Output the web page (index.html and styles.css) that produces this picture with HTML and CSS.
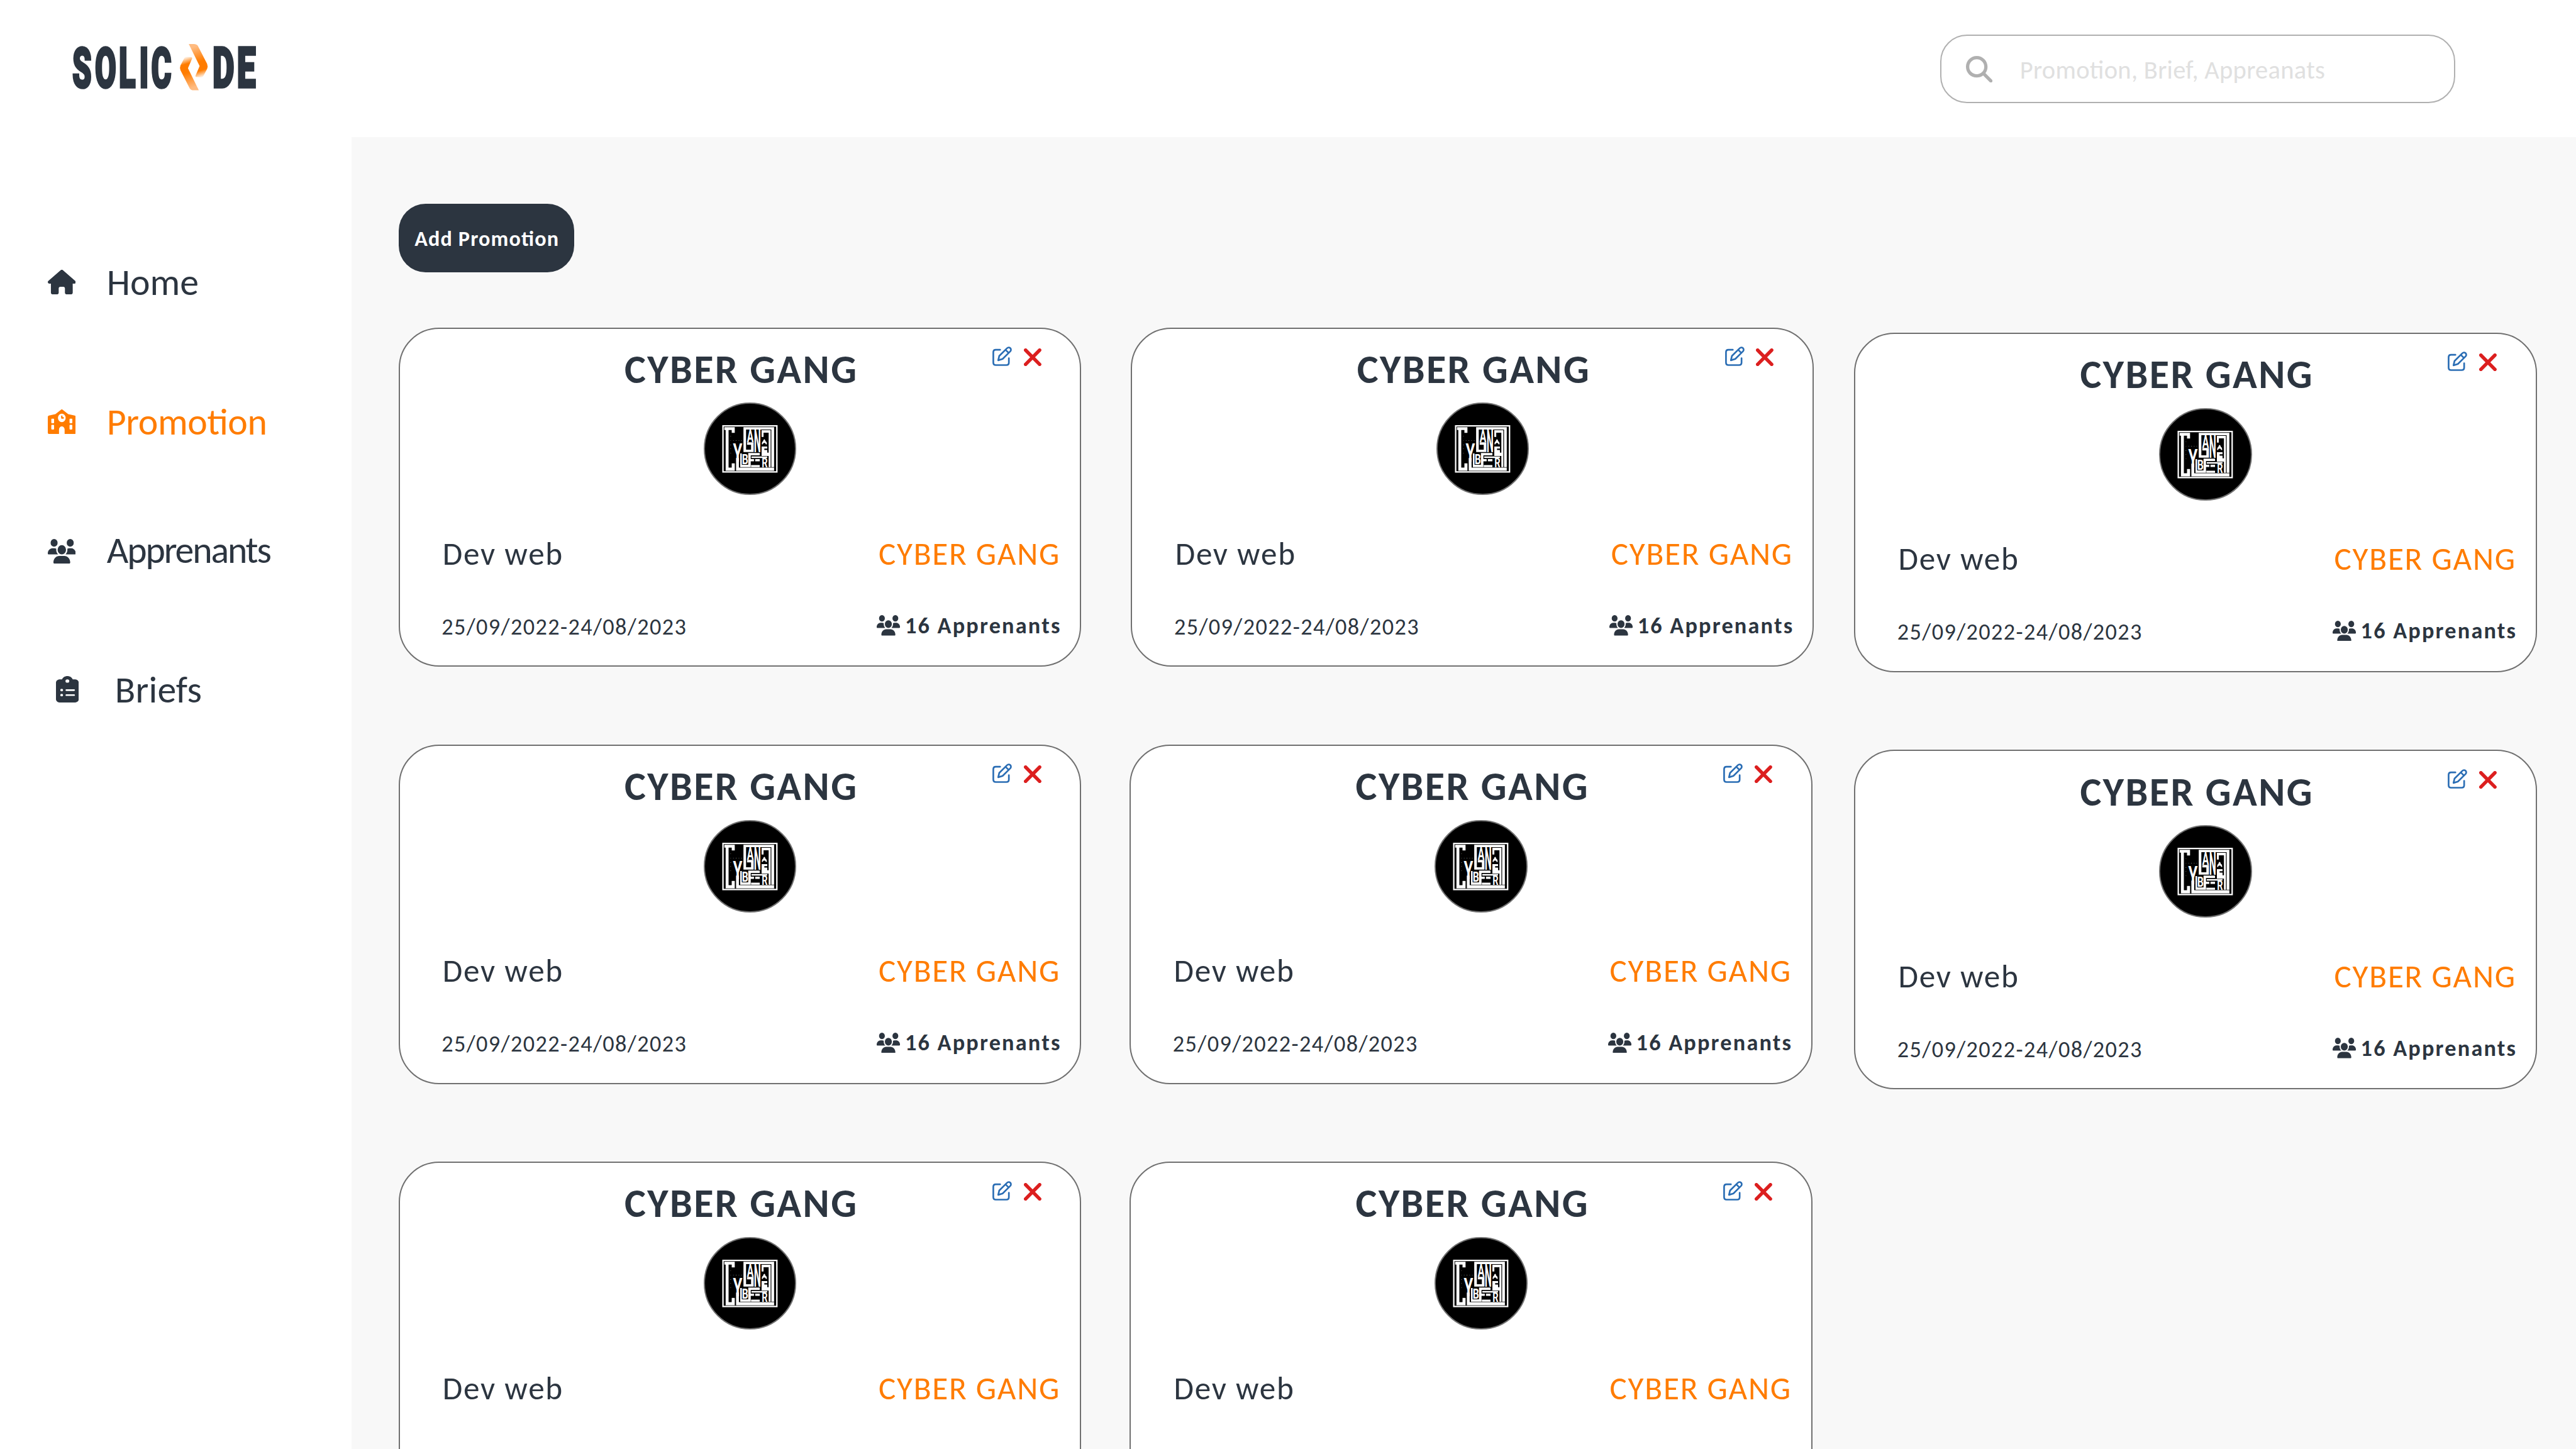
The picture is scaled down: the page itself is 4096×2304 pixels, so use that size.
FILE: index.html
```html
<!DOCTYPE html>
<html lang="fr">
<head>
<meta charset="utf-8">
<title>Solicode - Promotion</title>
<link rel="stylesheet" href="styles.css">
</head>
<body>
<svg class="sprite" aria-hidden="true">
  <symbol id="house" viewBox="0 0 576 512" preserveAspectRatio="none"><path d="M575.8 255.5c0 18-15 32.1-32 32.1h-32l.7 160.2c0 2.7-.2 5.4-.5 8.1V472c0 22.1-17.9 40-40 40H392c-22.1 0-40-17.9-40-40V384c0-17.7-14.3-32-32-32H256c-17.7 0-32 14.3-32 32v88c0 22.1-17.9 40-40 40H104c-22.1 0-40-17.9-40-40V287.6H32c-18 0-32-14-32-32.1c0-9 3-17 10-24L266.4 8c7-7 15-8 22-8s15 2 21 7L564.8 231.5c8 7 12 15 11 24z"/></symbol>
  <symbol id="school" viewBox="0 0 640 512" preserveAspectRatio="none"><path fill-rule="evenodd" d="M337.8 5.4C327-1.8 313-1.8 302.2 5.4L174 98L26 127Q0 133 0 158V480c0 17.7 14.3 32 32 32H256V416a64 64 0 0 1 128 0v96H608c17.7 0 32-14.3 32-32V158Q640 133 614 127L466 98zM96 192h32c8.8 0 16 7.2 16 16v64c0 8.8-7.2 16-16 16H96c-8.8 0-16-7.2-16-16V208c0-8.8 7.2-16 16-16zm400 16c0-8.8 7.2-16 16-16h32c8.8 0 16 7.2 16 16v64c0 8.8-7.2 16-16 16H512c-8.8 0-16-7.2-16-16V208zM96 320h32c8.8 0 16 7.2 16 16v64c0 8.8-7.2 16-16 16H96c-8.8 0-16-7.2-16-16V336c0-8.8 7.2-16 16-16zm400 16c0-8.8 7.2-16 16-16h32c8.8 0 16 7.2 16 16v64c0 8.8-7.2 16-16 16H512c-8.8 0-16-7.2-16-16V336zM232 176a88 88 0 1 1 176 0 88 88 0 1 1 -176 0zm88-48c-8.8 0-16 7.2-16 16v32c0 8.8 7.2 16 16 16h32c8.8 0 16-7.2 16-16s-7.2-16-16-16H336V144c0-8.8-7.2-16-16-16z"/></symbol>
  <symbol id="users" viewBox="0 0 640 512" preserveAspectRatio="none"><path d="M144 0a80 80 0 1 1 0 160A80 80 0 1 1 144 0zM512 0a80 80 0 1 1 0 160A80 80 0 1 1 512 0zM0 298.7C0 239.8 47.8 192 106.7 192h42.7c15.9 0 31 3.5 44.6 9.7c-1.3 7.2-1.9 14.7-1.9 22.3c0 38.2 16.8 72.5 43.3 96H21.3C9.6 320 0 310.4 0 298.7zM404.6 320c26.6-23.5 43.3-57.8 43.3-96c0-7.6-.7-15-1.9-22.3c13.6-6.3 28.7-9.7 44.6-9.7h42.7C592.2 192 640 239.8 640 298.7c0 11.8-9.6 21.3-21.3 21.3H404.6zM224 224a96 96 0 1 1 192 0 96 96 0 1 1 -192 0zM128 485.3C128 411.7 187.7 352 261.3 352H378.7C452.3 352 512 411.7 512 485.3c0 14.7-11.9 26.7-26.7 26.7H154.7c-14.7 0-26.7-11.9-26.7-26.7z"/></symbol>
  <symbol id="clipboard" viewBox="0 0 384 512" preserveAspectRatio="none"><path fill-rule="evenodd" d="M192 0c-41.8 0-77.4 26.7-90.5 64H64C28.7 64 0 92.7 0 128V448c0 35.3 28.7 64 64 64H320c35.3 0 64-28.7 64-64V128c0-35.3-28.7-64-64-64H282.5C269.4 26.7 233.8 0 192 0zm0 64a32 32 0 1 1 0 64 32 32 0 1 1 0-64zM72 272a24 24 0 1 1 48 0 24 24 0 1 1 -48 0zm104-16H304c8.8 0 16 7.2 16 16s-7.2 16-16 16H176c-8.8 0-16-7.2-16-16s7.2-16 16-16zM72 368a24 24 0 1 1 48 0 24 24 0 1 1 -48 0zm88 0c0-8.8 7.2-16 16-16H304c8.8 0 16 7.2 16 16s-7.2 16-16 16H176c-8.8 0-16-7.2-16-16z"/></symbol>
  <symbol id="edit" viewBox="115 68 175 175"><path fill="none" stroke="currentColor" stroke-width="15" stroke-linecap="round" stroke-linejoin="round" d="M184 97H145Q123 97 123 119V212Q123 234 145 234H240Q262 234 262 212V172M167 191L176 152L246 83A19.5 19.5 0 0 1 275 111L206 179ZM233 98L260 125"/></symbol>
  <symbol id="cross" viewBox="396 85 157 158"><path fill="none" stroke="currentColor" stroke-width="31" stroke-linecap="round" d="M411.5 100.5L537 227.5M537 100.5L411.5 227.5"/></symbol>
  <symbol id="gang" viewBox="55 60 827 829">
    <rect x="219.5" y="263.5" width="496" height="424" fill="none" stroke="#fff" stroke-width="13"/>
    <g fill="#fff">
      <path d="M232 275H328V328H300V302H271V648H300V608H328V676H244V302H232z"/>
      <path d="M408 275H690V644H665V297H432V482H478V438H441V415H502V504H408z"/>
      <path d="M575 303H658V644H640V540H575V453H627V473H600V510H640V327H593V365H575zM600 485H627V510H600z"/>
      <path d="M340 560H366V648H690V676H340z"/>
      <path d="M378 517H393V622H452V513H558V535H475V570H505V590H475V644H378zM516 570H558V590H516zM478 624H558V644H478zM482 545H627V560H482z"/>
      <path d="M600 386Q610 394 612 406Q624 410 624 434H614Q612 420 600 420Q588 420 586 434H577Q577 410 588 406Q590 394 600 386z"/>
    </g>
    <g class="art-type">
      <text x="311" y="592" font-size="235" textLength="86" lengthAdjust="spacingAndGlyphs">Y</text>
      <text x="440" y="413" font-size="158" textLength="61" lengthAdjust="spacingAndGlyphs">A</text>
      <text x="504" y="503" font-size="284" textLength="64" lengthAdjust="spacingAndGlyphs">N</text>
      <text x="394" y="618" font-size="127" textLength="58" lengthAdjust="spacingAndGlyphs">B</text>
      <text x="577" y="644" font-size="118" textLength="54" lengthAdjust="spacingAndGlyphs">R</text>
    </g>
    <g class="art-note">
      <text x="286 286 286 286 286" y="361 400 440 479 518">CYBER</text>
      <text x="311 336 361 386" y="400">GANG</text>
    </g>
  </symbol>
</svg>

<header class="topbar">
  <svg class="logo" viewBox="0 0 620 200" role="img" aria-label="Solicode">
    <defs>
      <linearGradient id="flame" gradientUnits="userSpaceOnUse" x1="390" y1="32" x2="420" y2="132">
        <stop offset="0.1" stop-color="#ffbb80"/>
        <stop offset="0.55" stop-color="#ff7c00"/>
        <stop offset="0.8" stop-color="#ff7c00"/>
        <stop offset="0.99" stop-color="#ff7c00" stop-opacity="0.08"/>
      </linearGradient>
      <path id="chevron" fill="url(#flame)" d="M382.8 31.7H398Q406 31.7 409.5 36.5L437.5 91Q440.5 99 437.5 106L426 128Q424.5 132 419 131.5L407 130.5Q401.5 130 403 126L415.2 97.3z"/>
    </defs>
    <g class="logo-type">
      <text transform="scale(.55 1)" x="65 187.4 317 427.7 492.8" y="162.2">SOLIC</text>
      <text transform="scale(.6 1)" x="756.2 877.7" y="162.2">DE</text>
    </g>
    <use href="#chevron"/>
    <use href="#chevron" transform="rotate(180 397.8 100.7)"/>
  </svg>
  <label class="search">
    <svg class="search-icon" viewBox="0 0 512 512"><path d="M416 208c0 45.9-14.9 88.3-40 122.7L502.6 457.4c12.5 12.5 12.5 32.8 0 45.3s-32.8 12.5-45.3 0L330.7 376c-34.4 25.2-76.8 40-122.7 40C93.1 416 0 322.9 0 208S93.1 0 208 0S416 93.1 416 208zM208 352a144 144 0 1 0 0-288 144 144 0 1 0 0 288z"/></svg>
    <input class="search-input" type="text" placeholder="Promotion, Brief, Appreanats">
  </label>
</header>

<div class="layout">
  <nav class="sidebar">
    <a class="nav-item"><svg class="nav-icon"><use href="#house"/></svg><span class="nav-label">Home</span></a>
    <a class="nav-item nav-item--active"><svg class="nav-icon"><use href="#school"/></svg><span class="nav-label">Promotion</span></a>
    <a class="nav-item nav-item--learners"><svg class="nav-icon"><use href="#users"/></svg><span class="nav-label">Apprenants</span></a>
    <a class="nav-item nav-item--briefs"><svg class="nav-icon"><use href="#clipboard"/></svg><span class="nav-label">Briefs</span></a>
  </nav>

  <main class="content">
    <button class="add-button">Add Promotion</button>
    <div class="cards">
      <article class="card">
        <div class="card-actions"><svg class="edit"><use href="#edit"/></svg><svg class="delete"><use href="#cross"/></svg></div>
        <h2 class="card-title">CYBER GANG</h2>
        <svg class="avatar"><use href="#gang"/></svg>
        <div class="card-row"><span class="field">Dev web</span><span class="group">CYBER GANG</span></div>
        <div class="card-foot"><span class="dates">25/09/2022-24/08/2023</span><span class="count"><svg class="count-icon"><use href="#users"/></svg><span class="count-text">16 Apprenants</span></span></div>
      </article>
      <article class="card">
        <div class="card-actions"><svg class="edit"><use href="#edit"/></svg><svg class="delete"><use href="#cross"/></svg></div>
        <h2 class="card-title">CYBER GANG</h2>
        <svg class="avatar"><use href="#gang"/></svg>
        <div class="card-row"><span class="field">Dev web</span><span class="group">CYBER GANG</span></div>
        <div class="card-foot"><span class="dates">25/09/2022-24/08/2023</span><span class="count"><svg class="count-icon"><use href="#users"/></svg><span class="count-text">16 Apprenants</span></span></div>
      </article>
      <article class="card card--low">
        <div class="card-actions"><svg class="edit"><use href="#edit"/></svg><svg class="delete"><use href="#cross"/></svg></div>
        <h2 class="card-title">CYBER GANG</h2>
        <svg class="avatar"><use href="#gang"/></svg>
        <div class="card-row"><span class="field">Dev web</span><span class="group">CYBER GANG</span></div>
        <div class="card-foot"><span class="dates">25/09/2022-24/08/2023</span><span class="count"><svg class="count-icon"><use href="#users"/></svg><span class="count-text">16 Apprenants</span></span></div>
      </article>
      <article class="card">
        <div class="card-actions"><svg class="edit"><use href="#edit"/></svg><svg class="delete"><use href="#cross"/></svg></div>
        <h2 class="card-title">CYBER GANG</h2>
        <svg class="avatar"><use href="#gang"/></svg>
        <div class="card-row"><span class="field">Dev web</span><span class="group">CYBER GANG</span></div>
        <div class="card-foot"><span class="dates">25/09/2022-24/08/2023</span><span class="count"><svg class="count-icon"><use href="#users"/></svg><span class="count-text">16 Apprenants</span></span></div>
      </article>
      <article class="card card--near">
        <div class="card-actions"><svg class="edit"><use href="#edit"/></svg><svg class="delete"><use href="#cross"/></svg></div>
        <h2 class="card-title">CYBER GANG</h2>
        <svg class="avatar"><use href="#gang"/></svg>
        <div class="card-row"><span class="field">Dev web</span><span class="group">CYBER GANG</span></div>
        <div class="card-foot"><span class="dates">25/09/2022-24/08/2023</span><span class="count"><svg class="count-icon"><use href="#users"/></svg><span class="count-text">16 Apprenants</span></span></div>
      </article>
      <article class="card card--low">
        <div class="card-actions"><svg class="edit"><use href="#edit"/></svg><svg class="delete"><use href="#cross"/></svg></div>
        <h2 class="card-title">CYBER GANG</h2>
        <svg class="avatar"><use href="#gang"/></svg>
        <div class="card-row"><span class="field">Dev web</span><span class="group">CYBER GANG</span></div>
        <div class="card-foot"><span class="dates">25/09/2022-24/08/2023</span><span class="count"><svg class="count-icon"><use href="#users"/></svg><span class="count-text">16 Apprenants</span></span></div>
      </article>
      <article class="card">
        <div class="card-actions"><svg class="edit"><use href="#edit"/></svg><svg class="delete"><use href="#cross"/></svg></div>
        <h2 class="card-title">CYBER GANG</h2>
        <svg class="avatar"><use href="#gang"/></svg>
        <div class="card-row"><span class="field">Dev web</span><span class="group">CYBER GANG</span></div>
      </article>
      <article class="card card--near">
        <div class="card-actions"><svg class="edit"><use href="#edit"/></svg><svg class="delete"><use href="#cross"/></svg></div>
        <h2 class="card-title">CYBER GANG</h2>
        <svg class="avatar"><use href="#gang"/></svg>
        <div class="card-row"><span class="field">Dev web</span><span class="group">CYBER GANG</span></div>
      </article>
    </div>
  </main>
</div>
</body>
</html>
```
FILE: styles.css
```css
/* 1rem = 10 units of the 1920-wide layout */
html { font-size: calc(100vw / 192); }
* { box-sizing: border-box; }
body {
  margin: 0;
  height: 100vh;
  overflow: hidden;
  display: flex;
  flex-direction: column;
  background: #fff;
  color: #2c3540;
  font-family: Carlito, Calibri, Lato, sans-serif;
  font-feature-settings: "liga" 1;
}
svg { display: block; fill: currentColor; }
.sprite { position: absolute; width: 0; height: 0; }

.topbar {
  flex: none;
  display: flex;
  justify-content: space-between;
  align-items: flex-start;
  height: 10.2rem;
  padding: 2.5rem 9rem 0 4.5rem;
}
.logo { width: 15.5rem; height: 5rem; }
.logo-type text {
  font: 900 167px Roboto, sans-serif;
  fill: #2c3540;
  stroke: #2c3540;
  stroke-width: 7;
}
.search {
  display: flex;
  align-items: center;
  gap: 2.05rem;
  width: 38.4rem;
  height: 5.1rem;
  margin-top: .1rem;
  padding-left: 1.83rem;
  border: .1rem solid #b0b0b0;
  border-radius: 2rem;
}
.search-icon { flex: none; width: 1.98rem; height: 1.98rem; color: #b0b0b0; }
.search-input {
  flex: 1;
  min-width: 0;
  height: 100%;
  padding: .08rem 0 0;
  border: 0;
  outline: 0;
  background: none;
  font: inherit;
  font-size: 1.9rem;
  letter-spacing: .3px;
  font-feature-settings: "liga" 1;
}
.search-input::placeholder { color: #e0e0e0; opacity: 1; }

.layout { flex: 1; min-height: 0; display: flex; }
.sidebar { flex: none; width: 26.2rem; padding: 8.83rem 0 0 3.54rem; }
.nav-item { display: flex; align-items: center; height: 4rem; margin-bottom: 6.39rem; }
.nav-item--active { color: #ff7c00; margin-bottom: 5.57rem; }
.nav-item--learners { margin-bottom: 6.4rem; }
.nav-icon { width: 2.09rem; height: 1.84rem; margin-right: 2.33rem; }
.nav-label { padding-top: .08rem; font-size: 2.8rem; line-height: 3.4rem; }
.nav-item--active .nav-label { letter-spacing: -.35px; }
.nav-item--learners .nav-icon { margin-top: .24rem; }
.nav-item--learners .nav-label { letter-spacing: -2.13px; }
.nav-item--briefs { padding-left: .61rem; }
.nav-item--briefs .nav-icon { width: 1.7rem; height: 1.97rem; margin-right: 2.72rem; }
.nav-item--briefs .nav-label { letter-spacing: .2px; }

.content { flex: 1; padding: 5rem 0 0 3.5rem; background: #f8f8f8; overflow: hidden; }
.add-button {
  display: block;
  width: 13.1rem;
  height: 5.1rem;
  margin-bottom: 4.1rem;
  padding: .04rem 0 0 .08rem;
  border: 0;
  border-radius: 2rem;
  background: #2c3540;
  color: #fff;
  font: bold 1.6rem Carlito, Calibri, Lato, sans-serif;
  font-feature-settings: "liga" 1;
  letter-spacing: 1.17px;
}
.cards {
  display: grid;
  grid-template-columns: 54.6rem 53.9rem 50.9rem;
  grid-auto-rows: 31.1rem;
}
.card {
  position: relative;
  width: 50.9rem;
  height: 25.3rem;
  padding: 1.22rem 1.6rem 0 3.2rem;
  border: .1rem solid #707070;
  border-radius: 3rem;
  background: #fff;
}
.card--low { margin-top: .4rem; }
.card--near { margin-left: -.1rem; }
.card-actions { position: absolute; top: 1.32rem; right: 2.9rem; display: flex; align-items: flex-end; gap: .88rem; }
.edit { width: 1.46rem; height: 1.46rem; color: #2a6db4; }
.delete { width: 1.31rem; height: 1.32rem; color: #dc1f1f; }
.card-title {
  margin: 0 -1.6rem 0 -3.2rem;
  padding-left: .2rem;
  font-size: 3rem;
  line-height: 3.6rem;
  letter-spacing: 2.42px;
  text-align: center;
}
.avatar {
  width: 6.9rem;
  height: 6.9rem;
  margin: .7rem 0 0 19.45rem;
  border: .1rem solid #707070;
  border-radius: 50%;
  background: #000;
}
.art-type { fill: #fff; }
.art-type text { font-family: Roboto, sans-serif; font-weight: 700; }
.art-note { fill: #999; font: 14px Roboto, sans-serif; }
.card-row {
  display: flex;
  justify-content: space-between;
  margin-top: 2.87rem;
  font-size: 2.4rem;
  line-height: 3rem;
  letter-spacing: 1.75px;
}
.group { margin-right: -.13rem; color: #ff7c00; }
.card-foot {
  display: flex;
  justify-content: space-between;
  align-items: flex-start;
  margin-top: 2.77rem;
  font-size: 1.7rem;
  line-height: 2.2rem;
}
.dates { margin: .1rem 0 0 -.08rem; letter-spacing: 1.38px; }
.count { display: flex; align-items: flex-start; gap: .35rem; margin-right: -.2rem; font-weight: bold; letter-spacing: 2.2px; }
.count-icon { width: 1.74rem; height: 1.54rem; margin-top: .3rem; }
```
